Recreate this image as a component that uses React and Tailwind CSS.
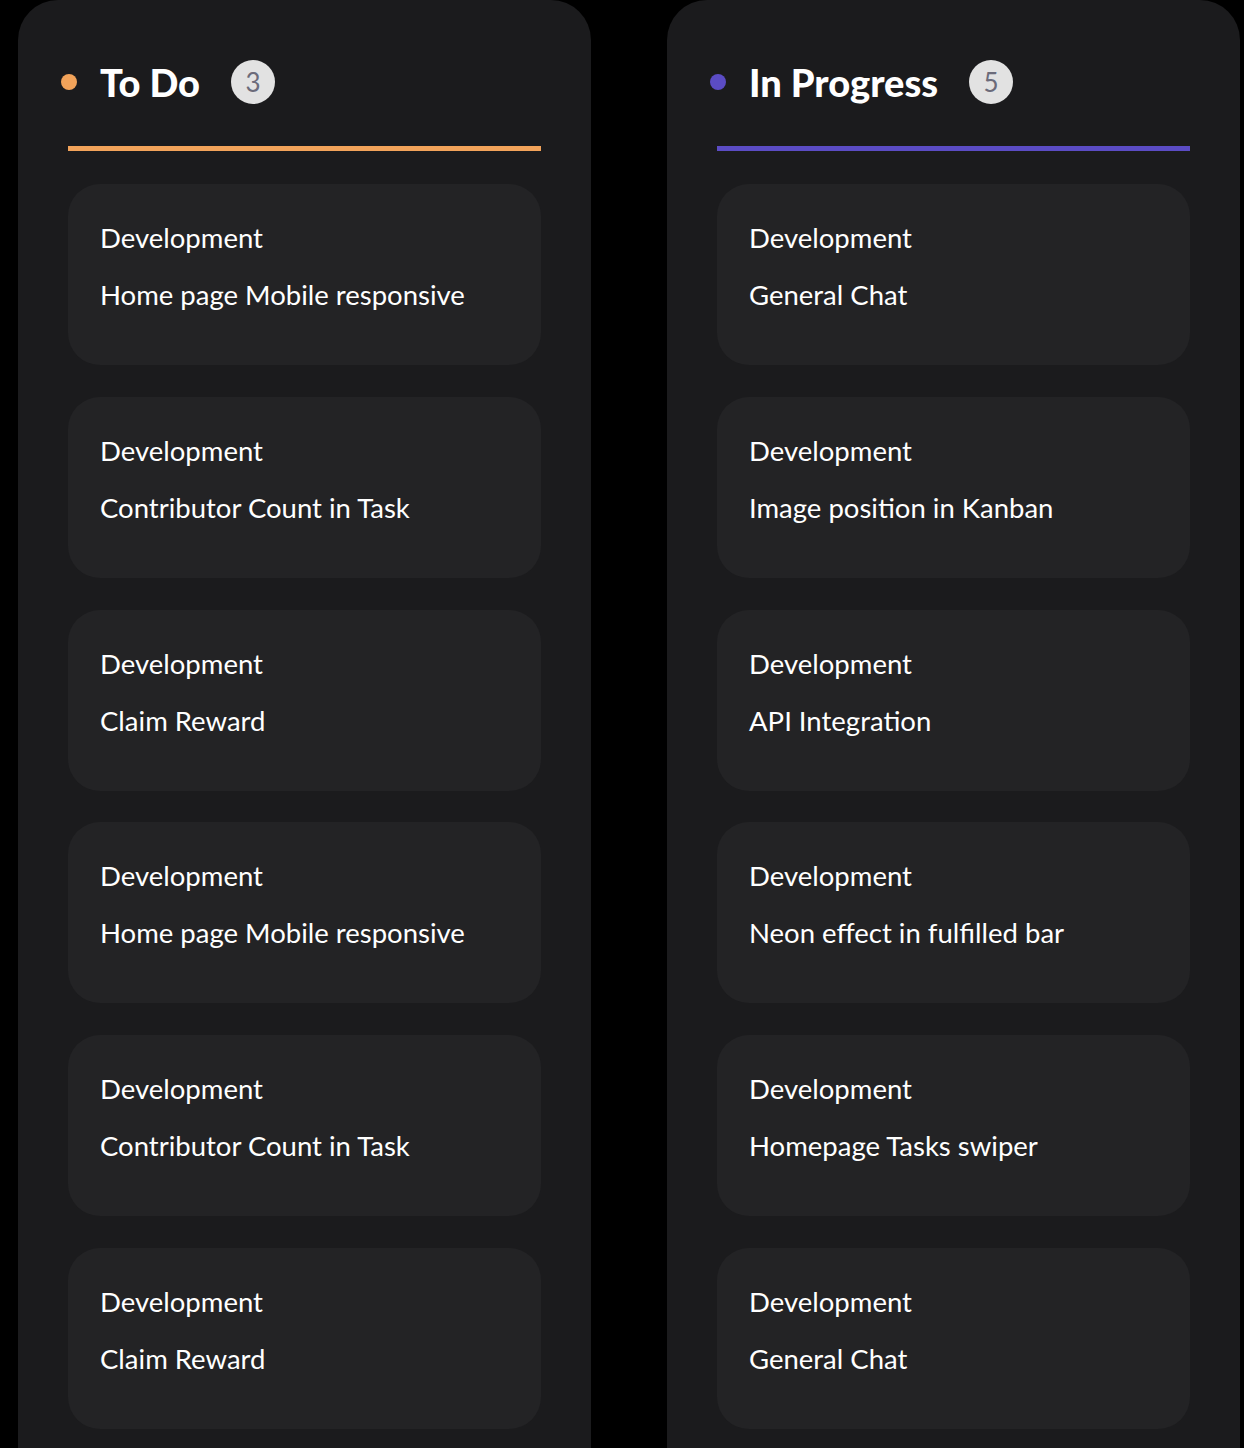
import React from "react";

const columns = [
  {
    title: "To Do",
    count: 3,
    dot: "bg-[#f2a35a]",
    bar: "bg-[#f2a35a]",
    tasks: [
      "Home page Mobile responsive",
      "Contributor Count in Task",
      "Claim Reward",
      "Home page Mobile responsive",
      "Contributor Count in Task",
      "Claim Reward",
    ],
  },
  {
    title: "In Progress",
    count: 5,
    dot: "bg-[#5b4cc4]",
    bar: "bg-[#5b4cc4]",
    tasks: [
      "General Chat",
      "Image position in Kanban",
      "API Integration",
      "Neon effect in fulfilled bar",
      "Homepage Tasks swiper",
      "General Chat",
    ],
  },
];

const TaskCard = ({ label, title }) => (
  <div className="h-[181px] shrink-0 rounded-[32px] bg-[#232325] px-8 pt-[36px]">
    <div className="text-[27.5px] leading-[36px] text-white">{label}</div>
    <div className="mt-[21px] text-[27.5px] leading-[36px] text-white">{title}</div>
  </div>
);

const Column = ({ col }) => (
  <section className="flex h-[1448px] w-[573px] shrink-0 flex-col rounded-t-[40px] bg-[#1b1b1d]">
    {/* Header */}
    <div className="mt-[60px] flex h-[44px] items-center pl-[43px]">
      <span className={`h-4 w-4 rounded-full ${col.dot}`} />
      <h2 className="ml-[23px] text-[38px] font-black leading-none text-white">
        {col.title}
      </h2>
      <span className="ml-[31px] flex h-[44px] w-[44px] items-center justify-center rounded-full bg-[#e2e2e2] text-[26px] text-[#6b6b7a]">
        {col.count}
      </span>
    </div>

    <div className={`ml-[50px] mt-[42px] h-[5px] w-[473px] ${col.bar}`} />

    {/* Cards */}
    <div className="mx-[50px] mt-[33px] flex flex-col gap-[31.8px]">
      {col.tasks.map((t, i) => (
        <TaskCard key={i} label="Development" title={t} />
      ))}
    </div>
  </section>
);

export default function App() {
  return (
    <div
      className="flex h-[1448px] w-[1244px] gap-[76px] overflow-hidden bg-black pl-[18px]"
      style={{ fontFamily: "Lato, 'Noto Sans', sans-serif" }}
    >
      {columns.map((col) => (
        <Column key={col.title} col={col} />
      ))}
    </div>
  );
}
